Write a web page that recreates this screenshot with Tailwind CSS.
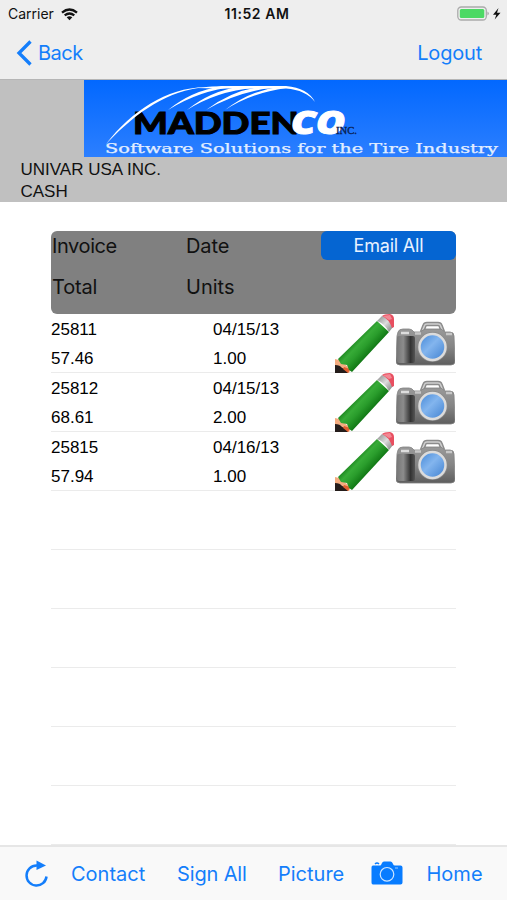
<!DOCTYPE html>
<html lang="en">
<head>
<meta charset="utf-8">
<title>Invoices</title>
<script src="https://cdn.jsdelivr.net/npm/@tailwindcss/browser@4"></script>
</head>
<body class="w-[507px] h-[900px] overflow-hidden bg-white font-['Inter',sans-serif] text-[#111]">
<svg class="absolute w-0 h-0">
  <defs>
    <linearGradient id="green" gradientUnits="userSpaceOnUse" x1="20" y1="24" x2="37" y2="40"><stop offset="0" stop-color="#157b18"/><stop offset="0.3" stop-color="#37ab37"/><stop offset="0.55" stop-color="#2a9d2c"/><stop offset="1" stop-color="#0a6e0e"/></linearGradient>
    <linearGradient id="metal" x1="0" y1="0" x2="1" y2="1"><stop offset="0" stop-color="#888"/><stop offset="0.5" stop-color="#dcdcdc"/><stop offset="1" stop-color="#777"/></linearGradient>
    <linearGradient id="body" x1="0" y1="0" x2="0" y2="1"><stop offset="0" stop-color="#999"/><stop offset="0.5" stop-color="#858585"/><stop offset="1" stop-color="#5e5e5e"/></linearGradient>
    <linearGradient id="grip" x1="0" y1="0" x2="1" y2="0"><stop offset="0" stop-color="#777"/><stop offset="0.35" stop-color="#8c8c8c"/><stop offset="0.75" stop-color="#333"/><stop offset="1" stop-color="#555"/></linearGradient>
    <linearGradient id="lens" x1="0" y1="0" x2="1" y2="1"><stop offset="0" stop-color="#4286d6"/><stop offset="0.45" stop-color="#83b5ee"/><stop offset="1" stop-color="#3f80d0"/></linearGradient>
  </defs>
  <symbol id="pencil" viewBox="0 0 59 59">
    <path d="M0 45 L4 46 L16 55 L14 59 H0Z" fill="#f4ac80"/>
    <path d="M0 51 Q5 51 7 54 Q12 55 13 59 H0Z" fill="#241c1a"/>
    <path d="M9 53 L15 55 L13 59 L8 55Z" fill="#e06030"/>
    <path d="M3 45 L42 7 L54 18 L17 58 L14 56 L12 51 L6 50Z" fill="url(#green)"/>
    <path d="M42 7 L47 2 Q55 5 58 13 L54 18 Q50 10 42 7Z" fill="url(#metal)"/>
    <path d="M47 2 Q49 0 55 0 Q59 1 59 5 V13 L57 14 Q54 5 47 2Z" fill="#e84f60"/>
    <path d="M48 2 L55 1 L57 5 L54 6Z" fill="#f38894"/>
  </symbol>
  <symbol id="slr" viewBox="0 0 59 46">
    <path d="M26 11 L28.500 4.500 Q29 3 31 3 H42 Q44 3 44.500 4.500 L47 11" fill="none" stroke="#8c8c8c" stroke-width="4.500"/>
    <path d="M26 11 L28.500 4.500 Q29 3 31 3 H42 Q44 3 44.500 4.500 L47 11" fill="none" stroke="#d0d0d0" stroke-width="1.500"/>
    <path d="M2 11 Q3 8 7 8 H13 Q16 8 18 11 H24 L29 8 H45 L49 11 H54 Q58 11 58 15 L59 40 Q59 44 55 44 H4 Q0 44 0 40 L1 15Z" fill="url(#body)" stroke="#808080" stroke-width="0.8"/>
    <rect x="1" y="15" width="18" height="27" rx="2" fill="url(#grip)"/>
    <path d="M5 12 H13" stroke="#ddd" stroke-width="2.500"/>
    <path d="M19 12.500 H25 M50 13 H56" stroke="#c8c8c8" stroke-width="2.500"/>
    <circle cx="36.500" cy="26" r="15" fill="#8b8b8b"/>
    <circle cx="36.500" cy="26" r="13" fill="url(#lens)" stroke="#dcdcdc" stroke-width="2.500"/>
  </symbol>
</svg>

<header class="h-[79px] bg-[#eeeeee] flex flex-col">
  <div class="h-7 grid grid-cols-3 items-center pl-2 pr-1">
    <div class="flex items-center gap-[7px]">
      <span class="text-[14px] leading-none tracking-[0px]">Carrier</span>
      <svg width="17" height="13" viewBox="0 0 17 13" fill="none" stroke="#111" stroke-width="2.300"><path d="M1 4.600 Q8.500 -1.700 16 4.600M3.700 7.400 Q8.500 3.600 13.300 7.400"/><path d="M5.700 9.200 Q8.500 7.200 11.300 9.200 L8.500 12.200Z" fill="#111" stroke="none"/></svg>
    </div>
    <span class="text-center text-[14px] leading-none font-semibold tracking-[0.55px] pl-[3px]">11:52 AM</span>
    <svg class="justify-self-end" width="46" height="16" viewBox="0 0 46 16"><rect x="0.800" y="1" width="28.500" height="13" rx="3.500" fill="none" stroke="#aaa" stroke-width="1.300"/><rect x="2.800" y="3" width="24.500" height="9" rx="1.500" fill="#4cd964"/><path d="M30.500 5.500 Q33 7.500 30.500 9.500Z" fill="#999"/><path d="M41.500 2 L36 8.700 H39.300 L37.700 13.500 L43.500 6.700 H40Z" fill="#111"/></svg>
  </div>
  <nav class="h-[49px] flex items-center justify-between pl-4 pr-[25px] text-[#147efb]">
    <a class="flex items-center gap-[6px]"><svg width="16" height="26" viewBox="0 0 16 26" fill="none" stroke="#147efb" stroke-width="3.300"><path d="M14.500 1.500 L3 13 L14.500 24.500"/></svg><span class="text-[20px] leading-none tracking-[-0.5px]">Back</span></a>
    <a class="text-[20px] leading-none tracking-[-0.2px]">Logout</a>
  </nav>
</header>

<section class="h-[123px] bg-[#c0c0c0] border-t border-[#b5b5b5] font-['Liberation_Sans',sans-serif]">
  <svg class="ml-[84px] block" width="423" height="77" viewBox="84 80 423 77">
    <defs><linearGradient id="sky" x1="0" y1="0" x2="0" y2="1"><stop offset="0" stop-color="#0268ff"/><stop offset="1" stop-color="#2c7fff"/></linearGradient></defs>
    <rect x="84" y="80" width="423" height="77" fill="url(#sky)"/>
    <text x="133" y="133.500" font-family="Lato" font-weight="900" font-size="29.500" textLength="166" lengthAdjust="spacingAndGlyphs" fill="#000" stroke="#000" stroke-width="1">MADDEN</text>
    <g fill="#fff">
      <path d="M106 144 C132 111 166 88 205 87 C168 91 139 110 108 142Z"/>
      <path d="M168 110 Q191 91 222 86 L235 87 Q200 90 168 110Z"/>
      <path d="M187 110 Q210 91 242 86 L254 88 Q217 91 187 110Z"/>
      <path d="M206 110 Q231 91 259 87 L270 88 Q235 93 206 110Z"/>
      <path d="M225 110 Q249 91 278 87 L286 88 Q251 93 225 110Z"/>
      <path d="M196 88 Q213 85.500 240 86 H286 Q308 88 315 102 Q306 90 286 88.500 H217Z"/>
      <text x="291" y="134" font-family="Open Sans" font-weight="800" font-style="italic" font-size="31" textLength="54" lengthAdjust="spacingAndGlyphs" stroke="#fff" stroke-width="1">CO</text>
    </g>
    <text x="336" y="134" font-family="Liberation Serif" font-size="9.500" fill="#0a2050" stroke="#0a2050" stroke-width="0.300" textLength="21" lengthAdjust="spacingAndGlyphs">INC.</text>
    <text x="105" y="153.300" font-family="DejaVu Serif" font-size="12" fill="#e2eeff" stroke="#e2eeff" stroke-width="0.250" textLength="393" lengthAdjust="spacingAndGlyphs">Software Solutions for the Tire Industry</text>
  </svg>
  <div class="pl-[20.5px] pt-[2px] text-[17px] leading-[22px]"><p>UNIVAR USA INC.</p><p>CASH</p></div>
</section>

<main class="mt-[29px] ml-[51px] w-[405px] h-[614px] overflow-hidden">
  <div class="relative h-[82.5px] bg-[#808080] rounded-[6px] grid grid-cols-[135px_1fr] grid-rows-[41px_41px] text-[20px] leading-[31px]">
    <span class="pl-px tracking-[-0.4px]">Invoice</span><span class="tracking-[-0.1px]">Date</span>
    <span class="pl-px tracking-[-0.2px]">Total</span><span>Units</span>
    <button class="absolute right-0 top-0 w-[135px] h-[29px] rounded-[6px] bg-[#0565d2] text-[#e8f2ff] text-[18px] leading-[29px] tracking-[-0.2px]">Email All</button>
  </div>
  <div id="rows" class="font-['Liberation_Sans',sans-serif] text-[17px] leading-[30px] text-black"></div>
</main>

<footer class="h-[55px] bg-[#f9f9f9] border-t-2 border-[#e6e6e6] flex items-center text-[20px] leading-none text-[#147efb]">
  <svg class="ml-6 shrink-0" width="25" height="28" viewBox="0 0 25 28"><path d="M14.500 5.500 H12.500 A10 10 0 1 0 22.500 16.500" fill="none" stroke="#147efb" stroke-width="2.500"/><path d="M12.500 0.500 L22 5.500 L12.500 10Z" fill="#147efb"/></svg>
  <a class="ml-[22px] w-[106px] shrink-0">Contact</a>
  <a class="w-[101px] shrink-0 tracking-[-0.15px]">Sign All</a>
  <a class="w-[93px] shrink-0">Picture</a>
  <svg class="shrink-0" width="32" height="25" viewBox="0 0 32 25"><path d="M2 4.500 H9 Q10 4.500 10.500 3 L11 2 Q11.500 0.500 13 0.500 H19.500 Q21 0.500 21.500 2 L22 3 Q22.500 4.500 24 4.500 H29.500 Q31.500 4.500 31.500 6.500 V21.500 Q31.500 23.500 29.500 23.500 H2 Q0.500 23.500 0.500 21.500 V6.500 Q0.500 4.500 2 4.500Z" fill="#087cff"/><path d="M4 3 Q6 1 8 3" stroke="#087cff" stroke-width="1.500" fill="none"/><circle cx="16" cy="13.300" r="6.800" fill="none" stroke="#cfe6ff" stroke-width="1.200"/><path d="M24 7 H27" stroke="#9bcbff"/></svg>
  <a class="ml-[23.5px]">Home</a>
</footer>
<script>
const invoices = [["25811","04/15/13","57.46","1.00"],["25812","04/15/13","68.61","2.00"],["25815","04/16/13","57.94","1.00"]];
const rows = document.getElementById("rows");
for (let i = 0; i < 9; i++) {
  const v = invoices[i];
  rows.innerHTML += `<div class="h-[59.1px] border-b border-[#ebebeb] flex">${v ? `
    <div class="w-[284px] pt-px grid grid-cols-[162px_1fr] auto-rows-[29px] content-start"><span>${v[0]}</span><span>${v[1]}</span><span>${v[2]}</span><span>${v[3]}</span></div>
    <svg class="w-[59px] h-[59px] shrink-0"><use href="#pencil"/></svg>
    <svg class="ml-[2px] mt-[7px] w-[59px] h-[46px] shrink-0"><use href="#slr"/></svg>` : ""}</div>`;
}
</script>
</body>
</html>
